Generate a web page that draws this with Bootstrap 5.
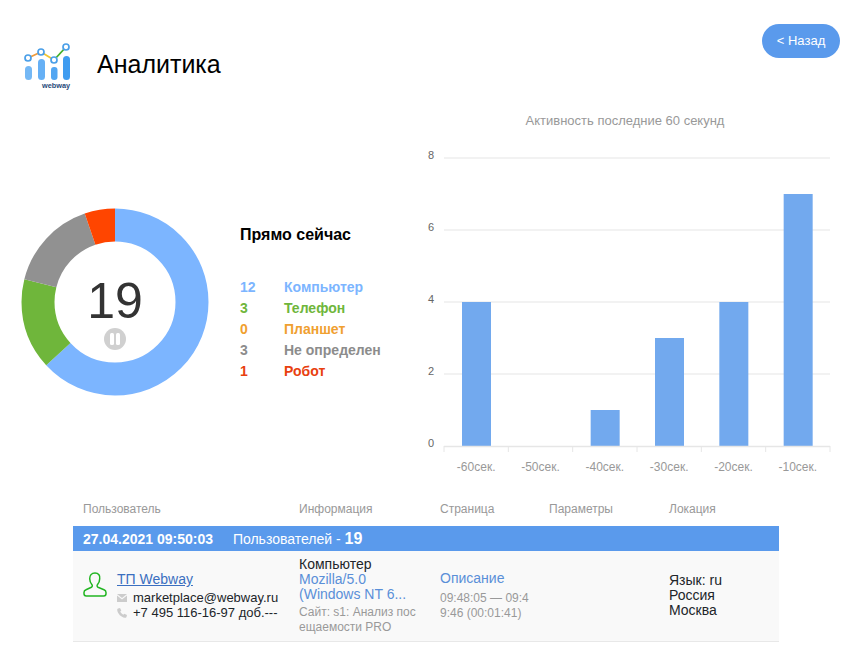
<!DOCTYPE html>
<html lang="ru">
<head>
  <meta charset="UTF-8" />
  <meta name="viewport" content="width=device-width, initial-scale=1.0"/>
  <title>Аналитика</title>
  <link href="https://cdn.jsdelivr.net/npm/bootstrap@5.3.3/dist/css/bootstrap.min.css" rel="stylesheet"/>
  <style>
    body { font-family: "Liberation Sans", Arial, sans-serif; background: #fff; color: #000; font-size: 14px; overflow: hidden; }
    .page-head { height: 100px; padding: 24px 25px 0 24px; }
    .head-logo { margin-top: 19px; }
    .page-title { font-size: 25px; font-weight: 400; line-height: 28px; margin: 26px 0 0 25px; color: #000; }
    .back-btn { width: 78px; height: 34px; border-radius: 17px; background: #5a9aec; border: 0; color: #fff; font-size: 13px; padding: 0; }
    .back-btn:hover { background: #5a9aec; color: #fff; }
    .stats-row { height: 395px; }
    .donut-box { margin: 108px 0 0 21px; width: 188px; height: 188px; }
    .legend-box { width: 170px; margin: 126px 0 0 31px; }
    .legend-title { font-size: 16px; font-weight: 700; line-height: 18px; margin-bottom: 33px; }
    .legend-row { font-weight: 700; line-height: 21px; }
    .legend-num { width: 44px; }
    .c-pc { color: #7cb5ff; }
    .c-phone { color: #6fb63b; }
    .c-tablet { color: #f0a030; }
    .c-none { color: #8c8c8c; }
    .c-robot { color: #e8400f; }
    .chart-box text { font-family: "Liberation Sans", Arial, sans-serif; }
    .sessions { width: 706px; margin: 0 0 0 73px; table-layout: fixed; }
    .sessions > :not(caption) > * > * { padding: 0 10px; border: 0; box-shadow: none; background: transparent; }
    .sessions > thead > tr > th { font-size: 12px; font-weight: 400; color: #999; height: 31px; vertical-align: middle; padding-bottom: 4px; }
    .sessions .day-row td { background: #5a9aec; color: #fff; height: 25px; vertical-align: middle; line-height: 24px; }
    .day-count { font-size: 16px; font-weight: 700; line-height: 16px; }
    .day-date { font-weight: 700; margin-right: 16px; }
    .sessions .user-row td { background: #f9f9f9; height: 90px; vertical-align: middle; border-bottom: 1px solid #e8e8e8; line-height: 15px; word-break: break-all; }
    .user-icon { margin-top: 1px; margin-right: 10px; }
    .user-text { margin-top: 1px; }
    .user-link { color: #3b6fc0; }
    .info-link { color: #5a8fd8; text-decoration: none; }
    .gray-note { font-size: 12px; color: #999; margin-top: 3px; }
    .page-note { margin-top: 5px; }
    .contact-line { white-space: nowrap; font-size: 13px; gap: 6px; }
    .contact-first { margin-top: 3px; }
    .sessions .user-row .info-cell { padding-top: 1px; }
  </style>
</head>
<body>
  <div class="page-head d-flex justify-content-between align-items-start">
    <div class="d-flex align-items-start">
      <svg width="48" height="52" viewBox="24 43 48 52" class="head-logo">
        <rect x="25" y="66" width="7" height="14" rx="3.5" fill="#74b8f5"/>
        <rect x="38" y="59" width="7" height="21" rx="3.5" fill="#66b0f5"/>
        <rect x="51" y="67" width="6.500" height="13" rx="3" fill="#52a6f2"/>
        <rect x="63" y="56" width="7" height="24" rx="3.500" fill="#3f9cf0"/>
        <path d="M28 58 41 52" stroke="#f09a3a" stroke-width="1.800"/>
        <path d="M41 52 54 60" stroke="#f2c531" stroke-width="1.800"/>
        <path d="M54 60 66 47" stroke="#43b02a" stroke-width="1.800"/>
        <g fill="#fff" stroke="#4a9fe8" stroke-width="1.700">
          <circle cx="28" cy="58" r="3"/><circle cx="41" cy="52" r="3"/>
          <circle cx="54" cy="60" r="3"/><circle cx="66" cy="47" r="3"/>
        </g>
        <text x="70" y="88" text-anchor="end" font-size="7.300" font-weight="700" fill="#1f4a7a" font-family="Liberation Sans, Arial, sans-serif">webway</text>
      </svg>
      <h1 class="page-title">Аналитика</h1>
    </div>
    <a href="#" class="btn back-btn d-flex align-items-center justify-content-center">&lt; Назад</a>
  </div>

  <div class="stats-row d-flex">
    <div class="donut-box">
      <svg width="188" height="188" viewBox="0 0 188 188">
        <g fill="none" stroke-width="33" transform="rotate(-90 94 94)">
          <circle cx="94" cy="94" r="77" pathLength="19" stroke="#7cb5ff" stroke-dasharray="12 7"/>
          <circle cx="94" cy="94" r="77" pathLength="19" stroke="#6fb63b" stroke-dasharray="3 16" stroke-dashoffset="-12"/>
          <circle cx="94" cy="94" r="77" pathLength="19" stroke="#919191" stroke-dasharray="3 16" stroke-dashoffset="-15"/>
          <circle cx="94" cy="94" r="77" pathLength="19" stroke="#ff4500" stroke-dasharray="1 18" stroke-dashoffset="-18"/>
        </g>
        <text x="94" y="110" text-anchor="middle" font-size="50" fill="#333" font-family="Liberation Sans, Arial, sans-serif">19</text>
        <circle cx="94" cy="131" r="11" fill="#d0d0d0"/>
        <rect x="89" y="125" width="4" height="12" rx="1.500" fill="#fff"/>
        <rect x="95" y="125" width="4" height="12" rx="1.500" fill="#fff"/>
      </svg>
    </div>
    <div class="legend-box">
      <div class="legend-title">Прямо сейчас</div>
      <div class="legend-row d-flex c-pc"><span class="legend-num">12</span><span>Компьютер</span></div>
      <div class="legend-row d-flex c-phone"><span class="legend-num">3</span><span>Телефон</span></div>
      <div class="legend-row d-flex c-tablet"><span class="legend-num">0</span><span>Планшет</span></div>
      <div class="legend-row d-flex c-none"><span class="legend-num">3</span><span>Не определен</span></div>
      <div class="legend-row d-flex c-robot"><span class="legend-num">1</span><span>Робот</span></div>
    </div>
    <div class="chart-box">
      <svg id="activityChart" width="430" height="385" viewBox="410 100 430 385"></svg>
    </div>
  </div>

  <table class="table sessions">
    <colgroup><col style="width:216px"><col style="width:141px"><col style="width:109px"><col style="width:120px"><col style="width:120px"></colgroup>
    <thead>
      <tr><th>Пользователь</th><th>Информация</th><th>Страница</th><th>Параметры</th><th>Локация</th></tr>
    </thead>
    <tbody>
      <tr class="day-row"><td colspan="5"><span class="day-date">27.04.2021 09:50:03</span> Пользователей - <span class="day-count">19</span></td></tr>
      <tr class="user-row">
        <td>
          <div class="d-flex align-items-start">
            <svg width="24" height="25" viewBox="0 0 24 25" class="user-icon flex-shrink-0">
              <path d="M12 1c-3.600 0-5.300 2.800-5.300 5.800 0 2.700 1.200 4.700 2.300 6 .6.700.3 2-.6 2.400L3 17.700C1.500 18.300 1 19.300 1 20.500v1.300C1 23.200 2 24 3.300 24h17.400c1.300 0 2.300-.8 2.300-2.200v-1.300c0-1.200-.5-2.200-2-2.800l-6-2.500c-.9-.4-1.200-1.700-.6-2.400 1.100-1.300 2.300-3.300 2.300-6C17.300 3.800 15.600 1 12 1Z" fill="none" stroke="#22b522" stroke-width="1.500" stroke-linejoin="round"/>
            </svg>
            <div class="user-text">
              <a href="#" class="user-link">ТП Webway</a>
              <div class="contact-line contact-first d-flex align-items-center">
                <svg width="10" height="8" viewBox="0 0 10 8"><path d="M0 0h10L5 4Z M0 1.500V8h10V1.500L5 5.500Z" fill="#ccc"/></svg>
                <span>marketplace@webway.ru</span>
              </div>
              <div class="contact-line d-flex align-items-center">
                <svg width="10" height="10" viewBox="0 0 10 10"><path d="M1 .5 3 0l1.300 2.500-1 1c.5 1.300 1.500 2.400 3 3.200l1-1L10 7l-.5 2c-.3.700-1 1-1.700.8C4 9 1 6 .2 2.200.1 1.500.4.800 1 .5Z" fill="#ccc"/></svg>
                <span>+7 495 116-16-97 доб.---</span>
              </div>
            </div>
          </div>
        </td>
        <td class="info-cell">
          <div>Компьютер</div>
          <a href="#" class="info-link">Mozilla/5.0<br>(Windows NT 6...</a>
          <div class="gray-note">Сайт: s1: Анализ посещаемости PRO</div>
        </td>
        <td>
          <a href="#" class="info-link">Описание</a>
          <div class="gray-note page-note">09:48:05 — 09:49:46 (00:01:41)</div>
        </td>
        <td></td>
        <td>Язык: ru<br>Россия<br>Москва</td>
      </tr>
    </tbody>
  </table>

  <script src="https://cdn.jsdelivr.net/npm/bootstrap@5.3.3/dist/js/bootstrap.bundle.min.js"></script>
  <script>
    // Activity chart
    const values = [4, 0, 1, 3, 4, 7];
    const labels = ['-60сек.', '-50сек.', '-40сек.', '-30сек.', '-20сек.', '-10сек.'];
    const left = 444, right = 830, y0 = 446, unit = 36, step = (right - left) / 6;
    let out = '<text x="625" y="125" text-anchor="middle" font-size="13" fill="#999">Активность последние 60 секунд</text>';
    [8, 6, 4, 2].forEach(v => {
      const y = y0 - v * unit;
      out += `<line x1="${left}" x2="${right}" y1="${y}" y2="${y}" stroke="#eee" stroke-width="1.500"/>`;
    });
    [8, 6, 4, 2, 0].forEach(v => {
      out += `<text x="431" y="${y0 - v * unit + 1}" text-anchor="middle" font-size="11" fill="#666">${v}</text>`;
    });
    values.forEach((v, i) => {
      const x = left + step * i;
      if (v) out += `<rect x="${x + 18}" y="${y0 - v * unit}" width="29" height="${v * unit}" fill="#72a9ee"/>`;
      out += `<text x="${x + step / 2}" y="471" text-anchor="middle" font-size="12" fill="#999">${labels[i]}</text>`;
    });
    out += `<line x1="${left}" x2="${right}" y1="446.500" y2="446.500" stroke="#e6e6e6" stroke-width="1.500"/>`;
    for (let i = 0; i <= 6; i++) {
      const x = left + step * i;
      out += `<line x1="${x}" x2="${x}" y1="446" y2="452" stroke="#e6e6e6"/>`;
    }
    document.getElementById('activityChart').innerHTML = out;
  </script>
</body>
</html>
